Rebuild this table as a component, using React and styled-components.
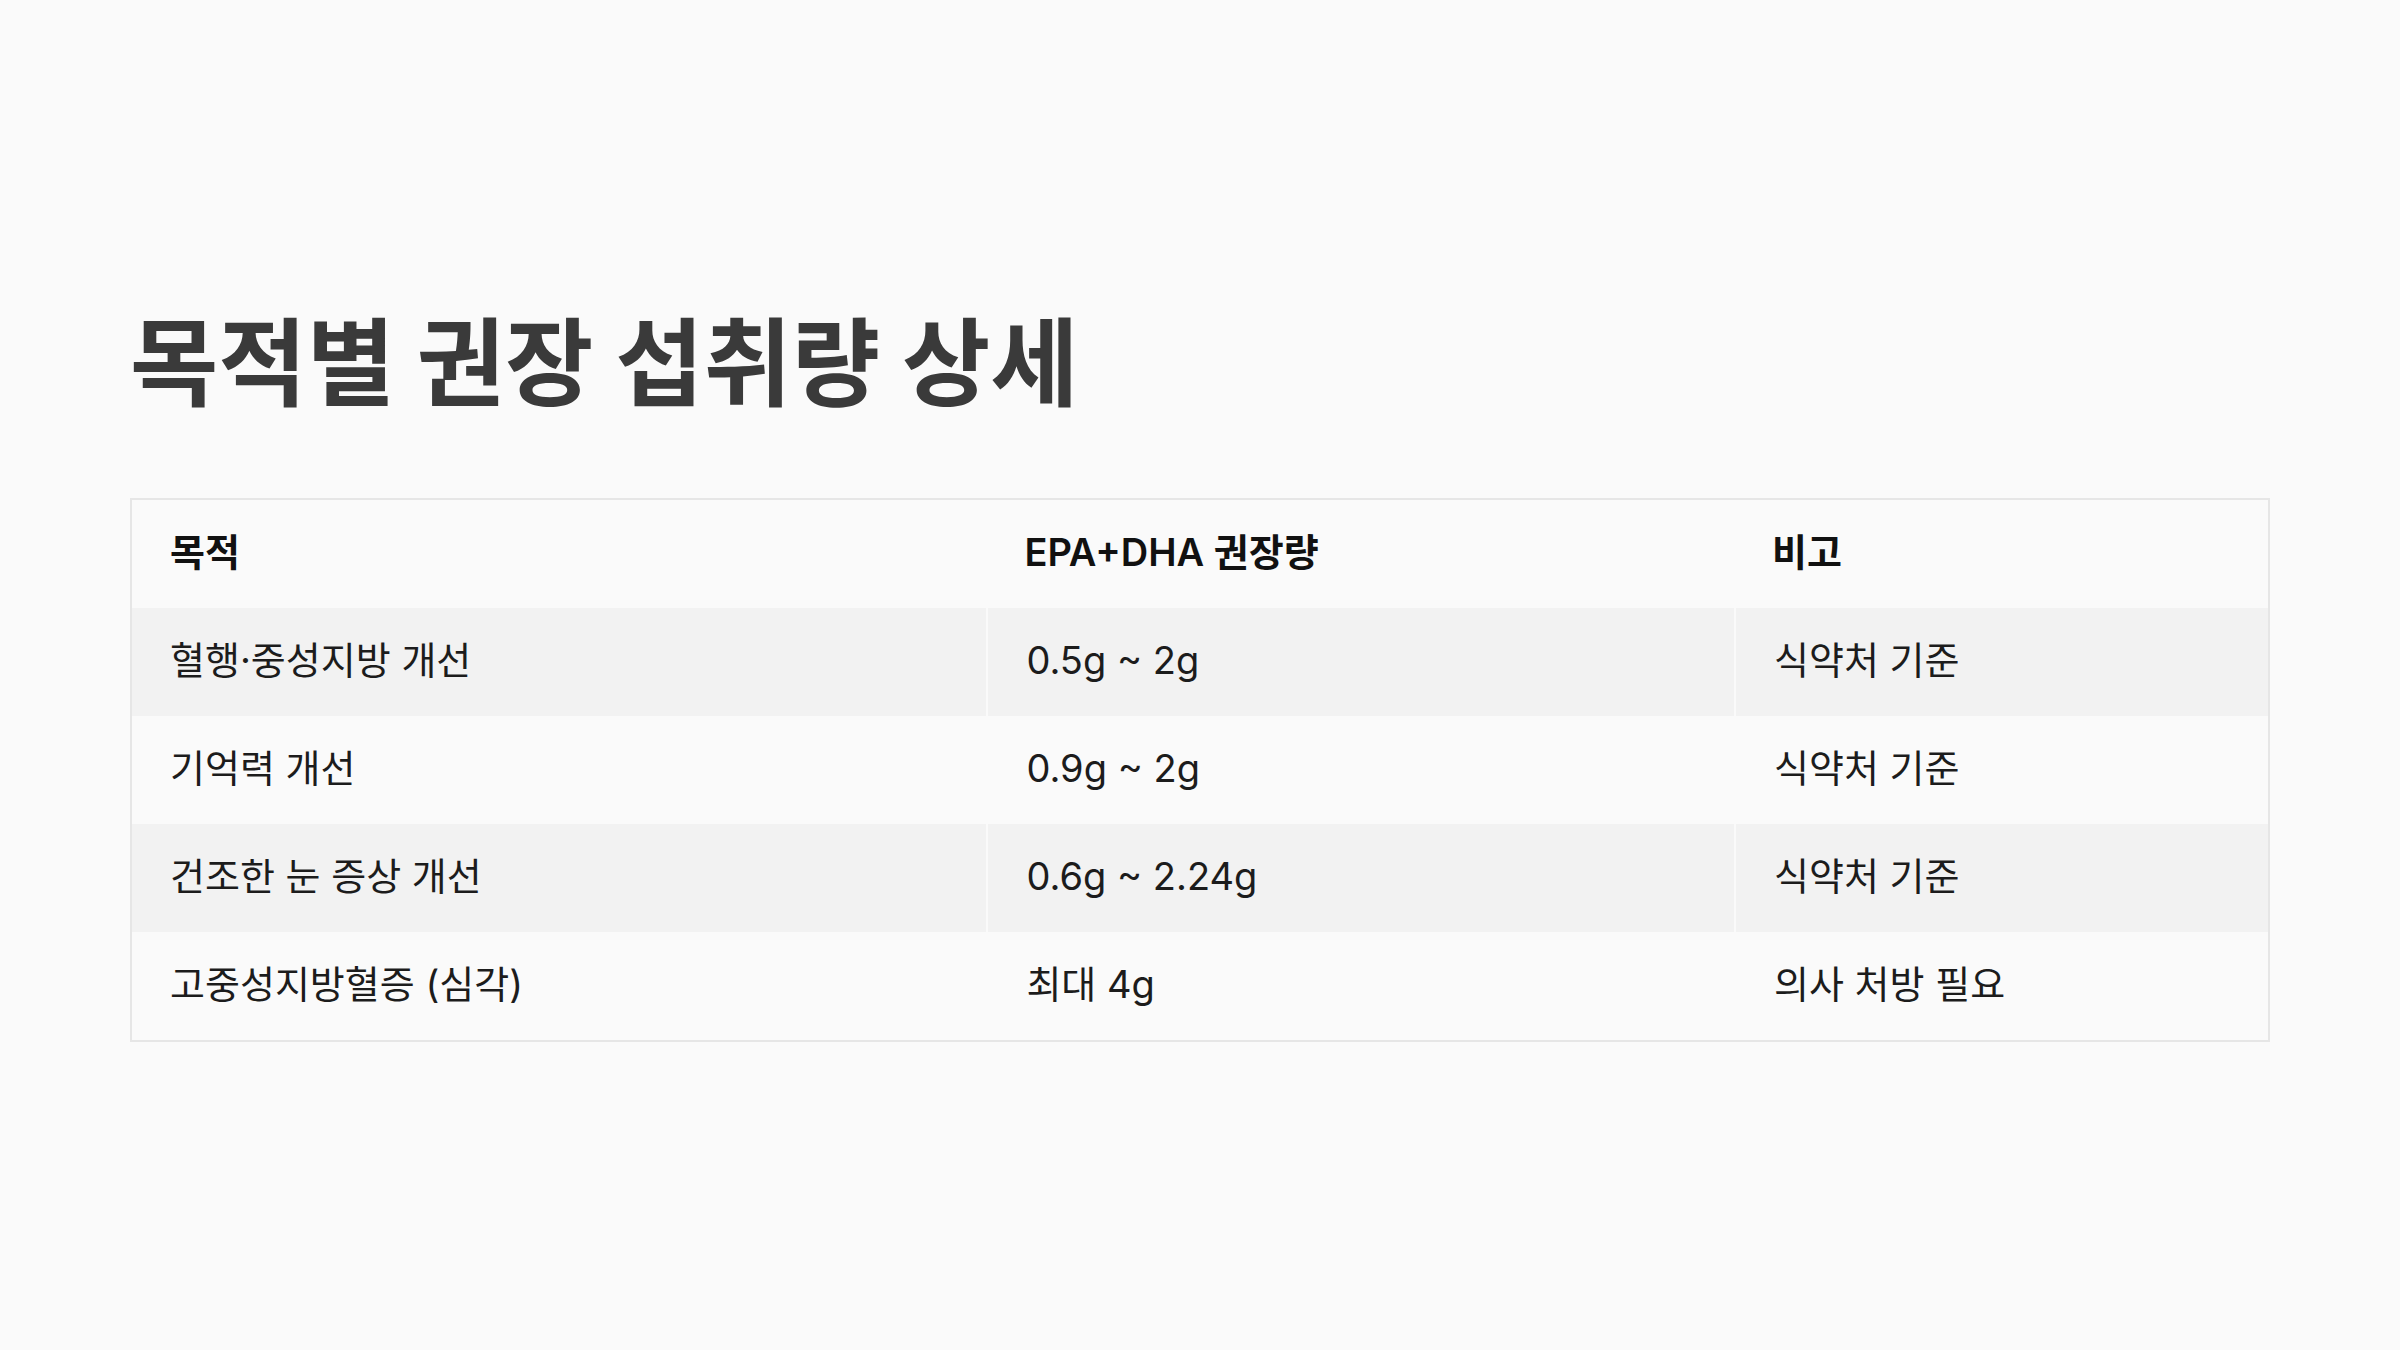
import React from 'react'
import styled, { createGlobalStyle } from 'styled-components'

const GlobalStyle = createGlobalStyle`
  html, body {
    margin: 0;
    padding: 0;
    background: #fafafa;
  }
  body {
    font-family: Inter, "Noto Sans CJK KR", sans-serif;
  }
`

const Slide = styled.main`
  box-sizing: border-box;
  width: 2400px;
  height: 1350px;
  padding: 299px 130px 0;
  background: #fafafa;
`

const Title = styled.h1`
  margin: 0 0 84px;
  font-family: "Noto Sans CJK KR", sans-serif;
  font-size: 96px;
  line-height: 1.2;
  font-weight: 700;
  color: #3a3a3a;
`

const Table = styled.table`
  width: 100%;
  border: 2px solid #e6e6e6;
  border-collapse: separate;
  border-spacing: 0;
  table-layout: fixed;
`

const HeadCell = styled.th`
  padding: 25px 38px 29px;
  line-height: 54px;
  text-align: left;
  font-size: 38px;
  font-weight: 600;
  color: #111;
  background: #fafafa;
`

const Row = styled.tr`
  background: ${props => (props.striped ? '#f2f2f2' : '#fafafa')};
`

const Cell = styled.td`
  padding: 25px 38px 29px;
  line-height: 54px;
  font-size: 38px;
  font-weight: 400;
  color: #1c1c1c;
  & + & {
    border-left: 2px solid #fafafa;
  }
`

const rows = [
  ['혈행·중성지방 개선', '0.5g ~ 2g', '식약처 기준'],
  ['기억력 개선', '0.9g ~ 2g', '식약처 기준'],
  ['건조한 눈 증상 개선', '0.6g ~ 2.24g', '식약처 기준'],
  ['고중성지방혈증 (심각)', '최대 4g', '의사 처방 필요'],
]

const App = () => {
  return (
    <>
      <GlobalStyle />
      <Slide>
        <Title>목적별 권장 섭취량 상세</Title>
        <Table>
          <colgroup>
            <col style={{ width: '40%' }} />
            <col style={{ width: '35%' }} />
            <col style={{ width: '25%' }} />
          </colgroup>
          <thead>
            <tr>
              <HeadCell>목적</HeadCell>
              <HeadCell>EPA+DHA 권장량</HeadCell>
              <HeadCell>비고</HeadCell>
            </tr>
          </thead>
          <tbody>
            {rows.map((row, i) => (
              <Row key={row[0]} striped={i % 2 === 0}>
                {row.map(text => (
                  <Cell key={text}>{text}</Cell>
                ))}
              </Row>
            ))}
          </tbody>
        </Table>
      </Slide>
    </>
  )
}

export default App
